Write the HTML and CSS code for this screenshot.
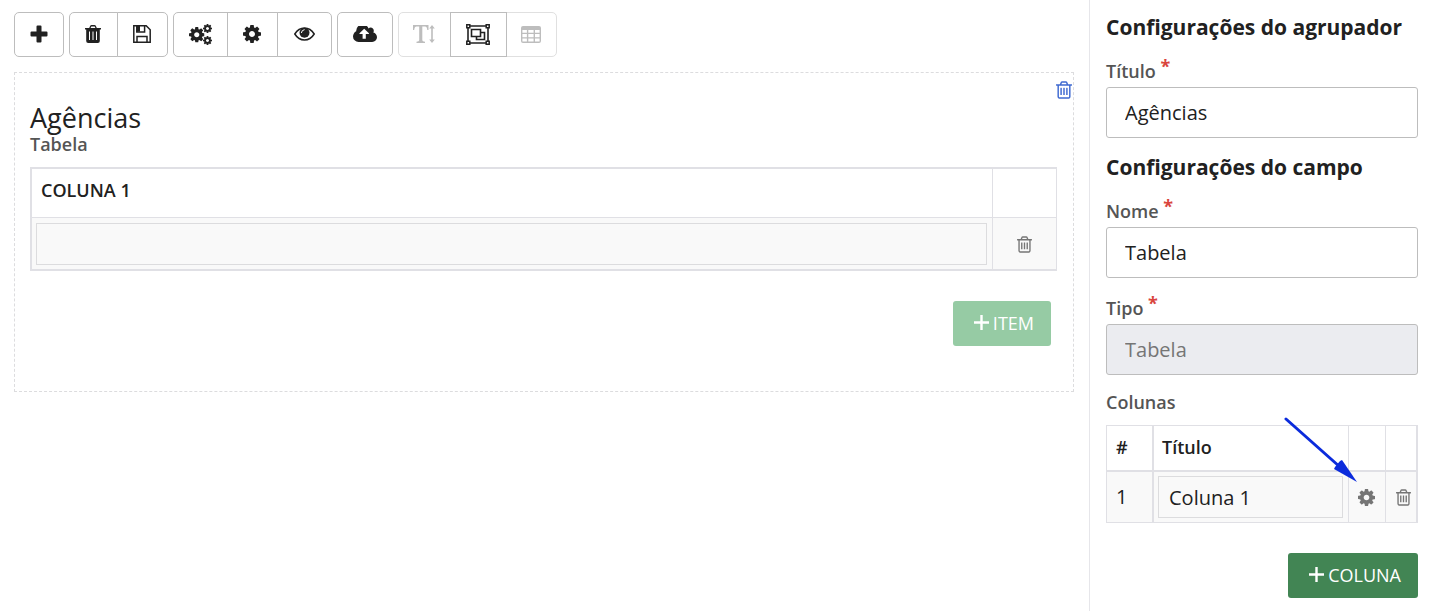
FILE: index.html
```html
<!DOCTYPE html>
<html lang="pt-BR">
<head>
<meta charset="utf-8">
<title>Configurações do agrupador</title>
<link rel="stylesheet" href="styles.css">
</head>
<body>
<svg class="sprite" aria-hidden="true">
  <symbol id="gear" viewBox="128 128 1536 1536"><path d="M1152 896q0-106-75-181t-181-75-181 75-75 181 75 181 181 75 181-75 75-181zm512-109v222q0 12-8 23t-20 13l-185 28q-19 54-39 91 35 50 107 138 10 12 10 25t-9 23q-27 37-99 108t-94 71q-12 0-26-9l-138-108q-44 23-91 38-16 136-29 186-7 28-36 28h-222q-14 0-24.500-8.500t-11.500-21.500l-28-184q-49-16-90-37l-141 107q-10 9-25 9-14 0-25-11-126-114-165-168-7-10-7-23 0-12 8-23 15-21 51-66.500t54-70.500q-27-50-41-99l-183-27q-13-2-21-12.500t-8-23.500v-222q0-12 8-23t19-13l186-28q14-46 39-92-40-57-107-138-10-12-10-24 0-10 9-23 26-36 98.500-107.500t94.500-71.500q13 0 26 10l138 107q44-23 91-38 16-136 29-186 7-28 36-28h222q14 0 24.500 8.500t11.500 21.500l28 184q49 16 90 37l142-107q9-9 24-9 13 0 25 10 129 119 165 170 7 8 7 22 0 12-8 23-15 21-51 66.500t-54 70.500q26 50 41 98l183 28q13 2 21 12.500t8 23.500z"/></symbol>
  <symbol id="trash" viewBox="192 128 1408 1536"><path d="M704 736v576q0 14-9 23t-23 9h-64q-14 0-23-9t-9-23v-576q0-14 9-23t23-9h64q14 0 23 9t9 23zm256 0v576q0 14-9 23t-23 9h-64q-14 0-23-9t-9-23v-576q0-14 9-23t23-9h64q14 0 23 9t9 23zm256 0v576q0 14-9 23t-23 9h-64q-14 0-23-9t-9-23v-576q0-14 9-23t23-9h64q14 0 23 9t9 23zm128 724v-948h-896v948q0 22 7 40.500t14.500 27 10.500 8.500h832q3 0 10.500-8.500t14.500-27 7-40.500zm-672-1076h448l-48-117q-7-9-17-11h-317q-10 2-17 11zm928 32v64q0 14-9 23t-23 9h-96v948q0 83-47 143.500t-113 60.500h-832q-66 0-113-58.500t-47-141.500v-952h-96q-14 0-23-9t-9-23v-64q0-14 9-23t23-9h309l70-167q15-37 54-63t79-26h320q40 0 79 26t54 63l70 167h309q14 0 23 9t9 23z"/></symbol>
  <symbol id="plus" viewBox="0 0 15 15"><path d="M6.300 0h2.400v6.300H15v2.400H8.700V15H6.300V8.700H0V6.300h6.300z"/></symbol>
</svg>
<div class="editor">
  <main class="workspace">
    <div class="toolbar">
      <div class="group">
        <button type="button" class="tool" aria-label="Adicionar"><svg width="18" height="18" viewBox="0 0 18 18"><path d="M7.500.5h3q1 0 1 1v5h5q1 0 1 1v3q0 1-1 1h-5v5q0 1-1 1h-3q-1 0-1-1v-5h-5q-1 0-1-1v-3q0-1 1-1h5v-5q0-1 1-1z"/></svg></button>
      </div>
      <div class="group">
        <button type="button" class="tool narrow" aria-label="Excluir"><svg width="16" height="18" viewBox="0 0 16 18"><path fill-rule="evenodd" d="M0 3h4.200L5 1.200Q5.500 0 6.500 0h3q1 0 1.500 1.200L11.800 3H16v1.500h-1.200V16q0 2-2 2H3.200q-2 0-2-2V4.500H0zM5.600 3h4.800l-.7-1.600H6.300zM4 6.500V15h1V6.500zm3.500 0V15h1V6.500zm3.500 0V15h1V6.500z"/></svg></button>
        <button type="button" class="tool" aria-label="Salvar"><svg width="18" height="18" viewBox="0 0 18 18"><path fill="none" stroke="currentColor" stroke-width="1.500" d="M.8.8h12.400l4 4v12.400H.8zM3.800 1v6h7.800V1M4 17v-5.600h10V17"/><path d="M3.500.8H7v5.800H3.500z"/></svg></button>
      </div>
      <div class="group">
        <button type="button" class="tool wide" aria-label="Configurações gerais"><svg width="23" height="21" viewBox="0 0 23 21"><use href="#gear" x="0" y="3" width="15.500" height="15.500"/><use href="#gear" x="14" y="0" width="9" height="9"/><use href="#gear" x="14" y="12" width="9" height="9"/></svg></button>
        <button type="button" class="tool" aria-label="Configurações"><svg width="18" height="18"><use href="#gear"/></svg></button>
        <button type="button" class="tool wide" aria-label="Visualizar"><svg width="21" height="14" viewBox="0 0 21 14"><path fill="none" stroke="currentColor" stroke-width="1.500" d="M.8 7Q4.500 1 10.500 1t9.700 6q-3.700 6-9.700 6T.8 7z"/><circle cx="10.500" cy="5.800" r="5"/><path fill="none" stroke="#fff" stroke-linecap="round" d="M7.400 5.600q.2-2.600 2.800-2.900"/></svg></button>
      </div>
      <div class="group">
        <button type="button" class="tool upload" aria-label="Publicar"><svg width="24" height="16" viewBox="-64 256 1920 1280"><path d="M1216 864q0-14-9-23l-352-352q-9-9-23-9t-23 9l-351 351q-10 12-10 24 0 14 9 23t23 9h224v352q0 13 9.500 22.500t22.500 9.500h192q13 0 22.500-9.500t9.500-22.500v-352h224q13 0 22.500-9.500t9.500-22.500zm640 288q0 159-112.500 271.500t-271.500 112.500h-1088q-185 0-316.500-131.500t-131.500-316.500q0-130 70-240t188-165q-2-30-2-43 0-212 150-362t362-150q156 0 285.500 87t188.500 231q71-62 166-62 106 0 181 75t75 181q0 76-41 138 130 31 213.500 135.500t83.500 238.500z"/></svg></button>
      </div>
      <div class="group">
        <button type="button" class="tool text" disabled aria-label="Campo de texto"><svg width="22" height="18" viewBox="0 0 22 18"><path d="M0 0h15.500v5h-1.200q-.3-3.400-2.300-3.400H9.300v13.600q0 1.300 2.700 1.500V18H3.500v-1.300q2.700-.2 2.700-1.500V1.600H3.500Q1.500 1.600 1.200 5H0zM19 0l2.800 3.600h-2v10.800h2L19 18l-2.800-3.600h2V3.600h-2z"/></svg></button>
        <button type="button" class="tool active" aria-label="Agrupador"><svg width="24" height="21" viewBox="0 0 24 21"><path fill="none" stroke="currentColor" stroke-width="1.600" d="M2 2h20v17H2zM5.500 5.500h9v7h-9zM14.500 8.500h4v7h-8v-3"/><path fill="#fff" stroke="currentColor" stroke-width="1.500" d="M.8.8h3v3h-3zM20.200.8h3v3h-3zM.8 17.200h3v3h-3zM20.200 17.200h3v3h-3z"/></svg></button>
        <button type="button" class="tool" disabled aria-label="Tabela"><svg width="20" height="17" viewBox="0 0 20 17"><path fill-rule="evenodd" d="M2 0h16q2 0 2 2v13q0 2-2 2H2q-2 0-2-2V2q0-2 2-2zM1.400 4v2.700h4.500V4zm5.900 0v2.700h5.300V4zM14 4v2.700h4.600V4zM1.400 8v3.200h4.500V8zm5.900 0v3.200h5.300V8zM14 8v3.200h4.600V8zM1.400 12.600v3h4.500v-3zm5.900 0v3h5.300v-3zm6.700 0v3h4.600v-3z"/></svg></button>
      </div>
    </div>
    <section class="panel">
      <button type="button" class="icon-button remove" aria-label="Excluir agrupador"><svg width="16" height="18"><use href="#trash"/></svg></button>
      <h1 class="panel-title">Agências</h1>
      <p class="label" id="field-name">Tabela</p>
      <table class="grid preview" aria-labelledby="field-name">
        <thead><tr><th>COLUNA 1</th><th class="action"></th></tr></thead>
        <tbody><tr><td><input class="cell-input" type="text" disabled aria-label="Coluna 1"></td><td class="action"><button type="button" class="icon-button" aria-label="Excluir item"><svg width="15" height="17"><use href="#trash"/></svg></button></td></tr></tbody>
      </table>
      <div class="actions panel-actions"><button type="button" class="add" disabled><svg width="15" height="15"><use href="#plus"/></svg>ITEM</button></div>
    </section>
  </main>
  <aside class="settings">
    <h2 class="heading">Configurações do agrupador</h2>
    <div class="field">
      <label class="label" for="titulo">Título <span class="required">*</span></label>
      <input class="text-input" id="titulo" type="text" value="Agências">
    </div>
    <h2 class="heading">Configurações do campo</h2>
    <div class="field">
      <label class="label" for="nome">Nome <span class="required">*</span></label>
      <input class="text-input" id="nome" type="text" value="Tabela">
    </div>
    <div class="field next">
      <label class="label" for="tipo">Tipo <span class="required">*</span></label>
      <input class="text-input" id="tipo" type="text" value="Tabela" disabled>
    </div>
    <p class="label columns-label" id="columns">Colunas</p>
    <div class="columns">
      <table class="grid column-list" aria-labelledby="columns">
        <thead><tr><th class="index">#</th><th>Título</th><th class="config"></th><th class="delete"></th></tr></thead>
        <tbody><tr><td class="index">1</td><td><input class="cell-input" type="text" value="Coluna 1" aria-label="Título da coluna"></td><td class="config"><button type="button" class="icon-button" aria-label="Configurar coluna"><svg width="17" height="17"><use href="#gear"/></svg></button></td><td class="delete"><button type="button" class="icon-button" aria-label="Excluir coluna"><svg width="15" height="17"><use href="#trash"/></svg></button></td></tr></tbody>
      </table>
      <svg class="pointer" width="73" height="66" viewBox="0 0 73 66" aria-hidden="true"><path stroke="#0b2bdc" stroke-width="3" stroke-linecap="round" d="M2 2l54 48"/><path fill="#0b2bdc" d="M73 65L50 52l1-2 5-6 2-1z"/></svg>
    </div>
    <div class="actions"><button type="button" class="add"><svg width="15" height="15"><use href="#plus"/></svg>COLUNA</button></div>
  </aside>
</div>
</body>
</html>
```
FILE: styles.css
```css
* { box-sizing: border-box; }
body {
  margin: 0;
  background: #fff;
  color: #212121;
  font: 18px/24px "Open Sans", "Noto Sans", sans-serif;
}
h1, h2, p { margin: 0; }
button, input { font: inherit; color: inherit; }
svg { display: block; fill: currentColor; }
.sprite { position: absolute; width: 0; height: 0; }

.editor { display: flex; min-height: 100vh; }
.workspace { flex: 1; min-width: 0; padding: 12px 15px 12px 14px; }

.toolbar { display: flex; gap: 5px; margin-bottom: 15px; }
.group { display: flex; }
.tool {
  display: flex;
  align-items: center;
  justify-content: center;
  width: 51px;
  height: 45px;
  padding: 0 1px 1px 0;
  border: 1px solid #bdbdbd;
  background: #fff;
}
.tool + .tool { margin-left: -1px; }
.tool:first-child { border-radius: 5px 0 0 5px; }
.tool:last-child { border-radius: 0 5px 5px 0; }
.tool:only-child { width: 50px; border-radius: 5px; }
.tool.narrow { width: 49px; }
.tool.wide { width: 55px; }
.tool.upload { width: 56px; }
.tool.text { width: 53px; }
.tool.active { position: relative; width: 57px; }
.tool:disabled { border-color: #e0e0e0; color: #bdbdbd; }

.panel {
  position: relative;
  min-height: 320px;
  padding: 29px 16px 15px 15px;
  border: 1px dashed #dcdcde;
}
.panel-title { font-size: 27px; line-height: 31px; font-weight: 400; }
.label { display: block; color: #555; font-weight: 600; }
.panel .label { line-height: 22px; margin-bottom: 12px; }
.icon-button {
  display: block;
  margin: 0 auto;
  padding: 0;
  border: 0;
  background: none;
  color: #757575;
}
.remove { position: absolute; top: 8px; right: 1px; color: #3f6ad1; }

.grid {
  width: 100%;
  border: 1px solid #e0e0e5;
  border-collapse: separate;
  border-spacing: 0;
  table-layout: fixed;
}
.grid th { padding: 0 9px 2px; text-align: left; font-weight: 600; }
.grid td { padding: 5px 5px 4px 4px; background: #f9f9f9; }
.grid th + th, .grid td + td { border-left: 1px solid #e0e0e5; }
.grid td { border-top: 1px solid #e0e0e5; }
.preview { border-width: 2px 1px 2px 2px; }
.preview th { height: 48px; padding-bottom: 6px; }
.preview .action { width: 64px; }
.cell-input {
  display: block;
  width: 100%;
  height: 42px;
  padding: 0 10px;
  border: 1px solid #dcdcde;
  background: #f9f9f9;
  font-size: 20px;
}
.actions { display: flex; justify-content: flex-end; margin-top: 30px; }
.panel-actions { padding-right: 6px; }
.add {
  display: flex;
  align-items: center;
  gap: 4px;
  height: 45px;
  padding: 0 17px 2px 21px;
  border: 0;
  border-radius: 3px;
  background: #428554;
  color: #fff;
}
.add svg { margin-bottom: 1px; }
.add:disabled { background: #96cba4; }

.settings { width: 340px; padding: 12px 11px 12px 16px; border-left: 1px solid #e6e6ea; }
.heading { font-size: 21px; line-height: 30px; font-weight: 700; margin-bottom: 17px; }
.field + .heading { margin-top: 14px; }
.field .label { margin-bottom: 4px; }
.next { margin-top: 18px; }
.required { color: #d9453d; font-weight: 700; line-height: 0; vertical-align: 5px; }
.text-input {
  display: block;
  width: 100%;
  height: 51px;
  padding: 0 18px;
  border: 1px solid #bdbdbd;
  border-radius: 3px;
  background: #fff;
  font-size: 20px;
}
.text-input:disabled { background: #ebecf0; color: #757575; }
.columns-label { margin: 15px 0 11px; }
.columns { position: relative; }
.column-list { border-right-width: 2px; }
.column-list th { height: 44px; }
.column-list td { height: 52px; padding: 4px 5px 4px 4px; border-top-width: 2px; }
.column-list .index { width: 45px; }
.column-list .index + * { border-left-width: 2px; }
.column-list th.index + th { padding-left: 8px; }
.column-list td.index { padding-left: 9px; font-size: 20px; }
.column-list .config { width: 37px; }
.column-list .delete { width: 31px; padding: 0 0 0 5px; }
.pointer { position: absolute; top: -8px; right: 61px; }
```
